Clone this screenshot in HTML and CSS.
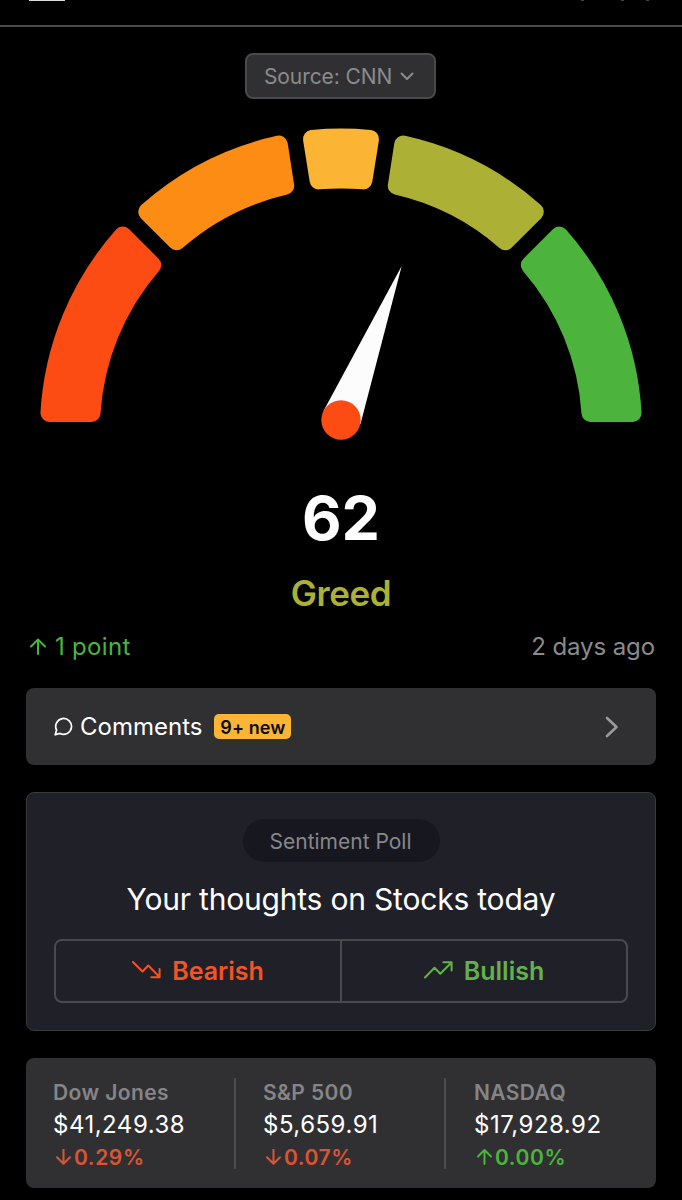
FILE: index.html
```html
<!DOCTYPE html>
<html lang="en">
<head>
    <meta charset="UTF-8">
    <meta name="viewport" content="width=device-width, initial-scale=1.0">
    <title>Fear &amp; Greed - Stocks</title>
    <link rel="stylesheet" href="styles.css">
</head>
<body>
    <div class="topbar">
        <div class="menu-line"></div>
        <div class="ticks"><i></i><i></i><i></i></div>
    </div>

    <div class="source-row">
        <button class="source">
            <span class="source-text">Source: CNN</span>
            <svg width="14" height="9" viewBox="0 0 14 9"><path d="M1.5 1.5 7 7l5.5-5.5"/></svg>
        </button>
    </div>

    <svg class="gauge" width="682" height="340" viewBox="0 110 682 340">
        <path class="seg extreme-fear" d="M49.44 413A292 292 0 0 1 122.8 235.6L152.2 265A250 250 0 0 0 91.51 413Z"/>
        <path class="seg fear" d="M147.2 211.8A292 292 0 0 1 278.8 144.6L285.2 185.8A250 250 0 0 0 176.6 241.2Z"/>
        <path class="seg neutral" d="M312 139A292 292 0 0 1 370 139L363.4 180.4A250 250 0 0 0 318.6 180.4Z"/>
        <path class="seg greed" d="M403.2 144.6A292 292 0 0 1 534.8 211.8L505.4 241.2A250 250 0 0 0 396.8 185.8Z"/>
        <path class="seg extreme-greed" d="M559.2 235.6A292 292 0 0 1 632.56 413L590.49 413A250 250 0 0 0 529.8 265Z"/>
        <path class="needle" d="M401.7 266 323.5 411 341 420 360.5 424Z"/>
        <circle class="hub" cx="341" cy="420" r="19.7"/>
    </svg>

    <div class="score">62</div>
    <div class="mood">Greed</div>

    <div class="change-row">
        <div class="change">
            <svg width="16" height="17" viewBox="0 0 16 17"><path d="M8 16V1.5M1 8.5l7-7 7 7"/></svg>
            <span class="change-text">1 point</span>
        </div>
        <span class="ago">2 days ago</span>
    </div>

    <div class="card comments">
        <svg class="bubble" width="19" height="19" viewBox="0 0 19 19"><path d="M1.2 17.8 2.6 13A7.9 7.9 0 1 1 6 16.4Z"/></svg>
        <span class="comments-text">Comments</span>
        <span class="badge"><span>9+ new</span></span>
        <svg class="chevron" width="14" height="22" viewBox="0 0 14 22"><path d="m2 2 9.5 9L2 20"/></svg>
    </div>

    <div class="card poll">
        <div class="pill"><span>Sentiment Poll</span></div>
        <div class="question">Your thoughts on Stocks today</div>
        <div class="votes">
            <div class="vote bearish">
                <svg width="29" height="18" viewBox="0 0 29 18"><path d="m1 1 9.5 9.5 5.8-6L27.5 16M19.3 16.3h8.3V8"/></svg>
                <span>Bearish</span>
            </div>
            <div class="vote bullish">
                <svg width="29" height="18" viewBox="0 0 29 18"><path d="m1 16.5 9.5-9.7 5.8 6L27.5 1.5M19.3 1.2h8.3v8.3"/></svg>
                <span>Bullish</span>
            </div>
        </div>
    </div>

    <div class="card stocks">
        <div class="stock">
            <div class="name">Dow Jones</div>
            <div class="price">$41,249.38</div>
            <div class="diff down">
                <svg width="15" height="16" viewBox="0 0 15 16"><path d="M7.5 0v14.5M1 8.2l6.5 6.5L14 8.2"/></svg>
                <span>0.29%</span>
            </div>
        </div>
        <div class="stock">
            <div class="name">S&amp;P 500</div>
            <div class="price">$5,659.91</div>
            <div class="diff down">
                <svg width="15" height="16" viewBox="0 0 15 16"><path d="M7.5 0v14.5M1 8.2l6.5 6.5L14 8.2"/></svg>
                <span>0.07%</span>
            </div>
        </div>
        <div class="stock">
            <div class="name">NASDAQ</div>
            <div class="price">$17,928.92</div>
            <div class="diff up">
                <svg width="15" height="16" viewBox="0 0 15 16"><path d="M7.5 15V1M1 7.5 7.5 1 14 7.5"/></svg>
                <span>0.00%</span>
            </div>
        </div>
    </div>
</body>
</html>
```
FILE: styles.css
```css
* {
    box-sizing: border-box;
}

body {
    margin: 0;
    height: 1200px;
    overflow: hidden;
    background-color: #000;
    color: #fff;
    font-family: Inter, "Liberation Sans", sans-serif;
    white-space: nowrap;
}

svg {
    display: block;
    flex-shrink: 0;
    fill: none;
    stroke: currentColor;
    stroke-width: 2;
    stroke-linecap: round;
    stroke-linejoin: round;
}

.topbar {
    display: flex;
    justify-content: space-between;
    height: 27px;
    padding: 0 33px 0 29px;
    border-bottom: 2px solid #4b4b4b;
}

.menu-line {
    width: 36px;
    height: 1px;
    background-color: #ddd;
}

.ticks {
    display: flex;
}

.ticks i {
    width: 3px;
    height: 1px;
    margin-left: 22px;
    background-color: #444;
}

.ticks i:first-child {
    margin-right: 15px;
}

.source-row {
    display: flex;
    justify-content: center;
    padding-top: 26px;
}

.source {
    display: flex;
    align-items: center;
    width: 191px;
    height: 46px;
    margin-right: 1px;
    padding: 1px 0 0 17px;
    gap: 8px;
    border: 2px solid #4a4a4c;
    border-radius: 8px;
    background-color: #303032;
    color: #8b8b8d;
    font-family: inherit;
    font-size: 21px;
    letter-spacing: -0.1px;
}

.gauge {
    margin-top: 11px;
    stroke: none;
}

.seg {
    stroke-width: 18;
}

.extreme-fear {
    fill: #fc4c14;
    stroke: #fc4c14;
}

.fear {
    fill: #fc8c14;
    stroke: #fc8c14;
}

.neutral {
    fill: #fcb434;
    stroke: #fcb434;
}

.greed {
    fill: #acb034;
    stroke: #acb034;
}

.extreme-greed {
    fill: #4cb43c;
    stroke: #4cb43c;
}

.needle {
    fill: #fcfcfc;
}

.hub {
    fill: #fc4c14;
}

.score {
    margin-top: 32px;
    height: 72px;
    line-height: 72px;
    font-size: 61px;
    font-weight: 700;
    text-align: center;
}

.mood {
    margin-top: 18px;
    height: 42px;
    line-height: 42px;
    font-size: 35px;
    font-weight: 600;
    letter-spacing: -0.4px;
    color: #acb034;
    text-align: center;
}

.change-row {
    display: flex;
    justify-content: space-between;
    align-items: center;
    height: 32px;
    margin-top: 16px;
    padding: 0 27px 0 30px;
    font-size: 24px;
}

.change {
    display: flex;
    align-items: center;
    gap: 9px;
    letter-spacing: 0.3px;
    color: #4cb43c;
}

.ago {
    letter-spacing: -0.1px;
    color: #8b8b8d;
}

.card {
    margin: 0 26px;
    border-radius: 8px;
    background-color: #303032;
}

.comments {
    display: flex;
    align-items: center;
    height: 77px;
    margin-top: 26px;
    padding: 0 37px 0 28px;
    font-size: 24px;
}

.bubble {
    stroke-width: 1.7;
}

.comments-text {
    margin-left: 7px;
}

.badge {
    display: flex;
    justify-content: center;
    align-items: center;
    width: 77px;
    height: 25px;
    margin-left: 12px;
    padding-top: 1px;
    border-radius: 5px;
    background-color: #fcb434;
    color: #0c0c0c;
    font-size: 18px;
    font-weight: 600;
    letter-spacing: 0.1px;
}

.chevron {
    margin-left: auto;
    color: #9a9a9c;
    stroke-width: 2.6;
}

.poll {
    height: 239px;
    margin-top: 27px;
    padding: 26px 27px 0;
    border: 1px solid #3a3a3d;
    background-color: #202028;
}

.pill {
    display: flex;
    justify-content: center;
    align-items: center;
    width: 197px;
    height: 43px;
    margin: 0 auto;
    padding: 2px 1px 0 0;
    border-radius: 22px;
    background-color: #171720;
    color: #87878b;
    font-size: 21px;
}

.question {
    height: 40px;
    margin-top: 17px;
    line-height: 40px;
    font-size: 30px;
    letter-spacing: -0.2px;
    text-align: center;
}

.votes {
    display: flex;
    height: 64px;
    margin-top: 20px;
    border: 2px solid #4a4a4e;
    border-radius: 8px;
}

.vote {
    display: flex;
    flex: 1;
    justify-content: center;
    align-items: center;
    gap: 11px;
    font-size: 25px;
    font-weight: 600;
}

.vote svg {
    margin-top: -3px;
}

.bearish {
    border-right: 2px solid #4a4a4e;
    color: #f45424;
}

.bullish {
    color: #64b04c;
}

.stocks {
    display: flex;
    height: 130px;
    margin-top: 27px;
    padding: 20px 0;
}

.stock {
    width: 210.5px;
    height: 91px;
    padding: 0 0 0 27px;
    border-right: 2px solid #4c4c4e;
}

.stock:last-child {
    padding-left: 28px;
    border-right: none;
}

.name {
    height: 29px;
    line-height: 29px;
    color: #858587;
    font-size: 21px;
    font-weight: 600;
    letter-spacing: 0.4px;
}

.price {
    height: 35px;
    line-height: 35px;
    font-size: 24px;
    letter-spacing: 0.5px;
}

.diff {
    display: flex;
    align-items: center;
    height: 30px;
    gap: 3px;
    padding-left: 3px;
    font-size: 21px;
    font-weight: 600;
    letter-spacing: 0.6px;
}

.down {
    color: #dc5434;
}

.up {
    color: #4cb43c;
}
```
